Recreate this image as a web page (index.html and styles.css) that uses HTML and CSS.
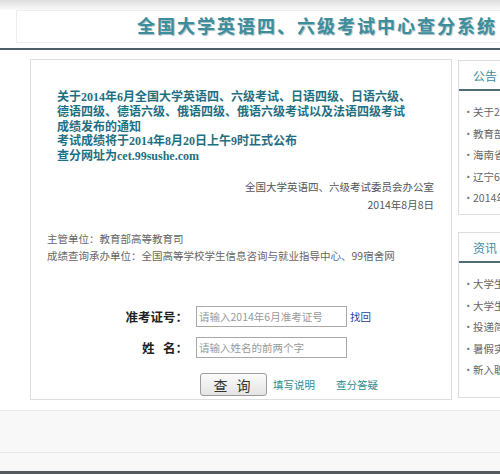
FILE: index.html
```html
<!DOCTYPE html>
<html lang="zh-CN">
<head>
<meta charset="utf-8">
<title>全国大学英语四、六级考试中心查分系统</title>
<link rel="stylesheet" href="styles.css">
</head>
<body>
<div class="page">
  <div class="topband"></div>
  <div class="header">
    <h1 class="title">全国大学英语四、六级考试中心查分系统</h1>
  </div>
  <div class="sep"></div>
  <div class="content">
    <div class="main">
      <div class="notice">
        <div>关于2014年6月全国大学英语四、六级考试、日语四级、日语六级、</div>
        <div>德语四级、德语六级、俄语四级、俄语六级考试以及法语四级考试</div>
        <div>成绩发布的通知</div>
        <div>考试成绩将于2014年8月20日上午9时正式公布</div>
        <div>查分网址为cet.99sushe.com</div>
      </div>
      <div class="sign">
        <div>全国大学英语四、六级考试委员会办公室</div>
        <div>2014年8月8日</div>
      </div>
      <div class="units">
        <div>主管单位：教育部高等教育司</div>
        <div>成绩查询承办单位：全国高等学校学生信息咨询与就业指导中心、99宿舍网</div>
      </div>
      <form class="form">
        <div class="row">
          <label class="lbl">准考证号：</label>
          <input class="inp" type="text" placeholder="请输入2014年6月准考证号">
          <a class="find" href="#">找回</a>
        </div>
        <div class="row">
          <label class="lbl">姓&nbsp;&nbsp;&nbsp;名：</label>
          <input class="inp" type="text" placeholder="请输入姓名的前两个字">
        </div>
        <div class="row btnrow">
          <button class="btn" type="button">查 询</button>
          <a class="lnk" href="#">填写说明</a>
          <a class="lnk lnk2" href="#">查分答疑</a>
        </div>
      </form>
    </div>
    <div class="side">
      <div class="box box1">
        <div class="boxhead"><span>公告</span></div>
        <ul class="list">
          <li>关于20</li>
          <li>教育部</li>
          <li>海南省</li>
          <li>辽宁6</li>
          <li>2014年</li>
        </ul>
      </div>
      <div class="box box2">
        <div class="boxhead"><span>资讯</span></div>
        <ul class="list">
          <li>大学生</li>
          <li>大学生</li>
          <li>投递简</li>
          <li>暑假实</li>
          <li>新入职</li>
        </ul>
      </div>
    </div>
  </div>
  <div class="footer">
    <div class="foot1"></div>
    <div class="foot2"></div>
    <div class="foot3"></div>
  </div>
</div>
</body>
</html>
```
FILE: styles.css
```css
* { box-sizing: border-box; }
html, body { margin: 0; padding: 0; background: #fff; }
body { font-family: "Noto Sans CJK SC", "Liberation Sans", sans-serif; }
.page { width: 500px; height: 474px; overflow: hidden; position: relative; }

.topband {
  height: 10px;
  background: linear-gradient(#dcdcdc, #efefef 60%, #fafafa);
}
.header {
  height: 33px;
  margin-left: 16px;
  width: 520px;
  border: 1px solid #eeeeee;
  border-right: none;
  background: #fff;
  display: flex;
  align-items: center;
}
.title {
  margin: 0 0 0 120px;
  font-family: "Liberation Serif", "Noto Sans CJK SC", serif;
  font-size: 18px;
  line-height: 24px;
  letter-spacing: 2px;
  font-weight: 700;
  color: #3d8e9c;
  white-space: nowrap;
  text-shadow: 1px 1px 1px #a8bcc2;
}
.sep {
  height: 2px;
  margin-top: 5px;
  background: #4d5e69;
}

.content {
  display: flex;
  gap: 6px;
  padding: 9px 0 0 30px;
  height: 360px;
}
.main {
  flex: 0 0 422px;
  height: 341px;
  border: 1px solid #dedede;
  padding: 30px 0 0 0;
}
.notice {
  padding-left: 26px;
  font-family: "Liberation Serif", "Noto Sans CJK SC", serif;
  font-size: 12px;
  line-height: 14.8px;
  font-weight: 700;
  color: #1f6f82;
  white-space: nowrap;
}
.sign {
  margin-top: 14px;
  padding-right: 17px;
  text-align: right;
  font-size: 10.5px;
  line-height: 18px;
  color: #555;
}
.units {
  margin-top: 16px;
  padding-left: 16px;
  font-size: 10.5px;
  line-height: 17px;
  color: #666;
  white-space: nowrap;
}
.form {
  margin-top: 43px;
  display: flex;
  flex-direction: column;
  gap: 11px;
}
.row {
  display: flex;
  align-items: center;
  height: 20px;
}
.lbl {
  width: 165px;
  text-align: right;
  font-size: 12.5px;
  font-weight: 700;
  color: #222;
  padding-right: 8px;
}
.inp {
  width: 151px;
  height: 21px;
  border: 1px solid #a9a9a9;
  padding: 0 2px;
  font-family: inherit;
  font-size: 10.5px;
  color: #333;
}
.inp::placeholder { color: #9a9a9a; }
.find {
  margin-left: 3px;
  font-size: 10.5px;
  color: #2a3fa0;
  text-decoration: none;
}
.btnrow { height: 22px; margin-top: 5px; }
.btn {
  margin-left: 169px;
  width: 67px;
  height: 23px;
  border: 1px solid #9c9c9c;
  border-radius: 3px;
  background: linear-gradient(#fbfbfb, #e4e4e4);
  font-family: inherit;
  font-size: 14px;
  letter-spacing: 3px;
  color: #333;
  padding: 0;
}
.lnk {
  margin-left: 6px;
  font-size: 10.5px;
  color: #2e8c8c;
  text-decoration: none;
}
.lnk2 { margin-left: 21px; }

.side {
  flex: 0 0 40px;
  display: flex;
  flex-direction: column;
  gap: 17px;
  padding-top: 1px;
}
.box {
  border: 1px solid #dedede;
  border-right: none;
}
.box1 { height: 155px; }
.box2 { height: 166px; }
.boxhead {
  height: 30px;
  border-bottom: 2px solid #4f6c79;
  display: flex;
  align-items: center;
  padding-left: 14px;
  font-size: 12px;
  color: #3a8c9c;
}
.list {
  list-style: none;
  margin: 0;
  padding: 10px 0 0 4px;
}
.list li {
  font-size: 10.5px;
  line-height: 21.6px;
  color: #666;
  white-space: nowrap;
}
.list li::before {
  content: "·";
  display: inline-block;
  width: 10px;
  color: #777;
}

.footer { margin-top: 0; }
.foot1 {
  height: 42px;
  background: #f8f8f8;
  border-top: 1px solid #ececec;
}
.foot2 {
  height: 19px;
  background: #f8f8f8;
  border-top: 1px solid #e6e6e6;
}
.foot3 {
  height: 10px;
  background: #555a5e;
}
```
